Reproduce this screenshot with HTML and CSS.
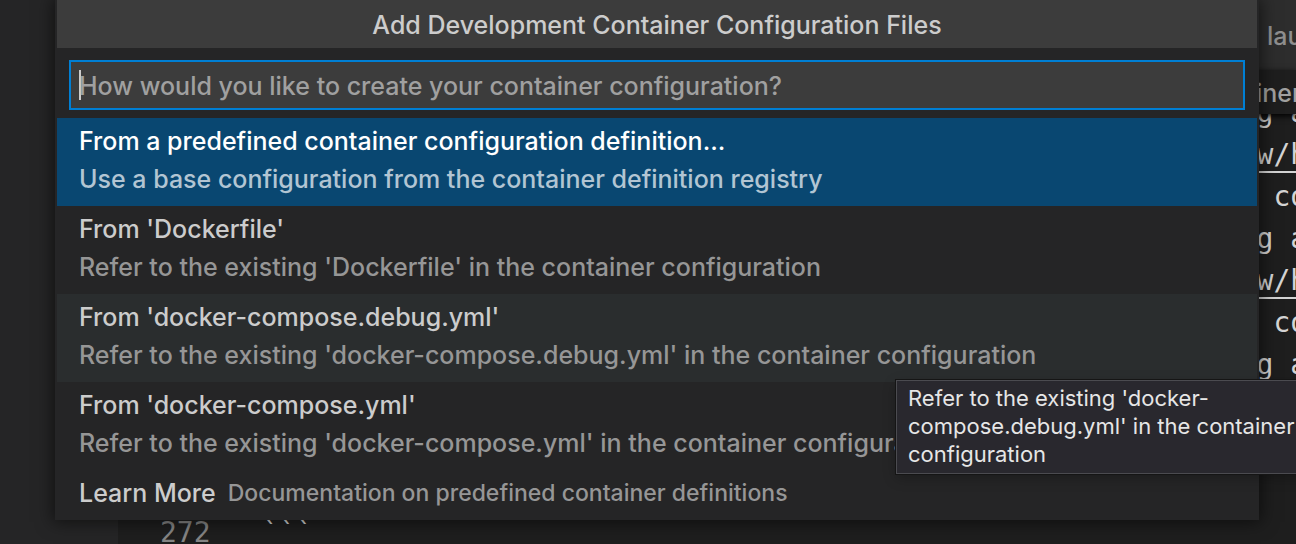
FILE: index.html
```html
<!DOCTYPE html>
<html lang="en">
<head>
<meta charset="utf-8">
<title>Add Development Container Configuration Files</title>
<link rel="stylesheet" href="styles.css">
</head>
<body>
<div class="workbench">
  <aside class="sidebar"></aside>
  <main class="editor">
    <div class="tabs"><a class="tab" href="#">lau</a></div>
    <div class="breadcrumbs"><span class="crumb">iner</span></div>
    <div class="code">
      <pre class="gutter">










272</pre>
      <pre class="lines">                                                           g a
                                                           <a href="#">w/h</a>
                                                            co
                                                           g a
                                                           <a href="#">w/h</a>
                                                            co
                                                           g a



```</pre>
    </div>
  </main>
</div>

<section class="picker" aria-labelledby="picker-title">
  <h1 class="picker-title" id="picker-title">Add Development Container Configuration Files</h1>
  <div class="picker-field">
    <input class="picker-input" type="text" aria-labelledby="picker-title" placeholder="How would you like to create your container configuration?">
  </div>
  <div class="picker-list">
    <button class="option selected" type="button">
      <span class="label">From a predefined container configuration definition...</span>
      <span class="detail">Use a base configuration from the container definition registry</span>
    </button>
    <button class="option" type="button">
      <span class="label">From 'Dockerfile'</span>
      <span class="detail">Refer to the existing 'Dockerfile' in the container configuration</span>
    </button>
    <button class="option hovered" type="button" aria-describedby="tip">
      <span class="label">From 'docker-compose.debug.yml'</span>
      <span class="detail">Refer to the existing 'docker-compose.debug.yml' in the container configuration</span>
    </button>
    <button class="option" type="button">
      <span class="label">From 'docker-compose.yml'</span>
      <span class="detail">Refer to the existing 'docker-compose.yml' in the container configuration</span>
    </button>
    <button class="option inline" type="button">
      <span class="label">Learn More</span>
      <span class="description">Documentation on predefined container definitions</span>
    </button>
  </div>
</section>

<div class="tooltip" id="tip" role="tooltip">Refer to the existing 'docker-<br>compose.debug.yml' in the container<br>configuration</div>
</body>
</html>
```
FILE: styles.css
```css
* {
  box-sizing: border-box;
}

body {
  margin: 0;
  height: 100vh;
  overflow: hidden;
  position: relative;
  background: #1e1e1e;
  color: #cccccc;
  font-family: Inter, "Liberation Sans", sans-serif;
  font-size: 25px;
  font-weight: 500;
}

.workbench {
  display: flex;
  height: 100%;
}

.sidebar {
  flex: 0 0 118px;
  background: #252526;
}

.editor {
  flex: 1;
  min-width: 0;
  display: flex;
  flex-direction: column;
  overflow: hidden;
}

.tabs,
.breadcrumbs {
  flex: none;
  display: flex;
  justify-content: flex-end;
  white-space: nowrap;
}

.tabs {
  height: 70px;
  background: #2d2d2d;
}

.tab {
  width: 29px;
  line-height: 72px;
  color: #8f8f8f;
  text-decoration: none;
}

.breadcrumbs {
  height: 44px;
  background: #1e1e1e;
  box-shadow: 0 2px 6px #000000;
  z-index: 1;
}

.crumb {
  width: 40px;
  line-height: 46px;
  color: #a0a0a0;
}

.code {
  flex: 1;
  min-height: 0;
  display: flex;
  margin-top: -22px;
  font: 28px/42px "DejaVu Sans Mono", monospace;
  color: #d4d4d4;
}

.gutter,
.lines {
  margin: 0;
  font: inherit;
}

.gutter {
  flex: 0 0 144px;
  padding-left: 42px;
  color: #858585;
}

.lines a {
  color: inherit;
  text-underline-offset: 7px;
  text-decoration-thickness: 2px;
}

.picker {
  position: absolute;
  top: 0;
  left: 55px;
  right: 37px;
  z-index: 2;
  padding: 0 2px 8px;
  background: #252526;
  box-shadow: 0 0 16px 2px #00000090;
}

.picker-title {
  margin: 0;
  height: 48px;
  background: #3c3c3c;
  font-size: 25px;
  font-weight: 500;
  line-height: 50px;
  text-align: center;
}

.picker-field {
  padding: 12px 12px 8px;
}

.picker-input {
  display: block;
  width: 100%;
  height: 50px;
  padding: 2px 8px 0;
  border: 2px solid #007fd4;
  outline: 0;
  background: linear-gradient(#cccccc, #cccccc) 8px 8px / 2px 30px no-repeat #3c3c3c;
  color: #cccccc;
  font: inherit;
}

.picker-input::placeholder {
  color: #a0a0a0;
  opacity: 1;
}

.option {
  display: flex;
  flex-direction: column;
  width: 100%;
  padding: 4px 22px 8px;
  border: 0;
  background: none;
  color: #cccccc;
  font: inherit;
  line-height: 38px;
  text-align: left;
  white-space: nowrap;
}

.detail,
.description {
  color: #969696;
}

.selected {
  background: #094771;
  color: #ffffff;
}

.selected .detail {
  color: #b2c5d3;
}

.hovered {
  background: #2a2d2e;
}

.inline {
  flex-direction: row;
  gap: 12px;
  padding: 4px 22px 0;
}

.description {
  font-size: 23px;
}

.tooltip {
  position: absolute;
  top: 380px;
  left: 896px;
  z-index: 3;
  width: 410px;
  padding: 3px 11px 5px;
  border: 1px solid #4b4b50;
  outline: 1px solid #151515;
  background: #29282e;
  box-shadow: 0 4px 12px #00000040;
  color: #e6e6e6;
  font-size: 22px;
  font-weight: 400;
  line-height: 28px;
  white-space: nowrap;
}
```
